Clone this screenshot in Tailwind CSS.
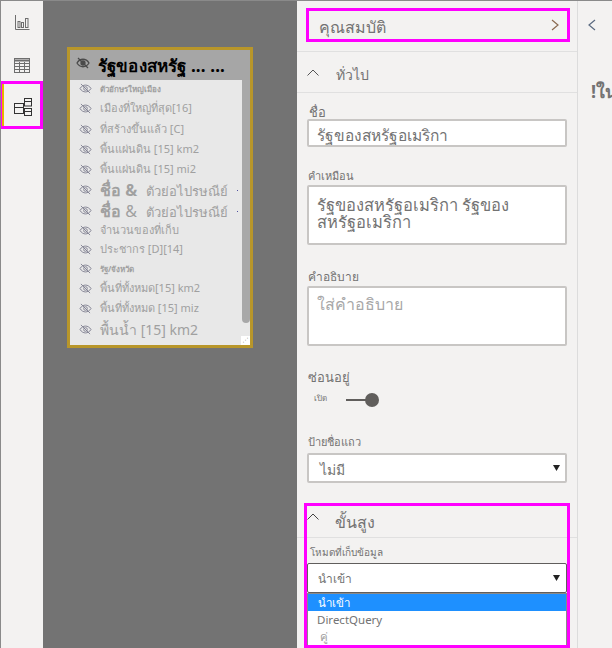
<!DOCTYPE html>
<html><head><meta charset="utf-8"><script src="https://cdn.jsdelivr.net/npm/@tailwindcss/browser@4"></script></head>
<body class="m-0 overflow-hidden">
<div class="w-[612px] h-[648px] flex bg-[#f3f2f1] font-['Noto_Sans','DejaVu_Sans',sans-serif] text-[#737373] overflow-hidden border-t border-[#8a8a8a]">
  <!-- rail -->
  <div class="w-[43px] h-full shrink-0 flex flex-col items-stretch pt-[7px] border-l border-[#8a8a8a]">
    <div class="h-[28px] flex items-center justify-center">
      <svg width="15" height="15" viewBox="0 0 15 15" fill="none" stroke="#6e6e6e"><path d="M.5 0v14.500H14.500"/><rect x="3" y="6.500" width="2" height="6"/><rect x="6.500" y="7.500" width="2" height="5"/><rect x="10.500" y="3.500" width="2.500" height="9"/></svg>
    </div>
    <div class="h-[28px] mt-[15px] flex items-center justify-center">
      <svg width="16" height="15" viewBox="0 0 16 15" fill="none" stroke="#6e6e6e"><rect x=".5" y=".5" width="15" height="14"/><path d="M.5 2.500h15" stroke-width="2"/><path d="M.5 5.500h15M.5 8.500h15M.5 11.500h15M5.500 4v10M10.500 4v10"/></svg>
    </div>
    <div class="h-[48px] w-[42px] mt-[2px] border-[3px] border-l-[1px] border-[#ff00ff] flex items-stretch bg-[#f3f2f1]">
      <span class="w-[2px] bg-[#e8b400]"></span>
      <div class="flex-1 flex items-center justify-center pt-[3px] pl-[1px]">
        <svg width="18" height="18" viewBox="0 0 18 18" fill="none" stroke="#333"><rect x=".5" y="5.500" width="9" height="10"/><path d="M.5 9.500h9"/><rect x="10.500" y=".5" width="7" height="7.500" fill="#f3f2f1"/><path d="M10.500 3.500h7"/><rect x="10.500" y="10.500" width="7" height="7" fill="#f3f2f1"/><path d="M10.500 13.500h7"/></svg>
      </div>
    </div>
  </div>
  <!-- canvas -->
  <div class="relative w-[254px] h-full shrink-0 bg-[#737373]">
    <div class="absolute left-[24px] top-[46px] w-[186px] h-[301px] border-[3px] border-[#b8962a] bg-[#e8e8e8] flex flex-col overflow-hidden">
      <div class="h-[30px] shrink-0 bg-[#a6a6a6] flex items-center pl-[6px] gap-[8px]">
        <svg class="-mt-[5px]" width="14" height="12" viewBox="0 0 14 12" fill="none" stroke="#4a4a4a" stroke-width="1.3"><path d="M1 6c3-5 9-5 12 0c-3 5-9 5-12 0z"/><path d="M2 1l10 10"/><circle cx="7" cy="6" r="2" fill="#4a4a4a"/></svg>
        <span class="text-[17px] leading-none font-bold text-black whitespace-nowrap tracking-[0.15px] pt-[1px]">รัฐของสหรัฐ ... ...</span>
      </div>
      <div class="relative flex-1 flex flex-col text-[#a0a0a0]">
        <div class="absolute right-0 top-0 w-[8px] h-[243px] bg-[#a8a8a8] rounded-b"></div>
        <div class="absolute right-0 bottom-0 w-[9px] h-[9px] bg-white text-[#555] text-[6px] leading-[9px] text-center">⋰</div>
        <div class="h-[17px] flex items-center pl-[9px] gap-[8px] text-[8px] font-bold"><svg width="13" height="11" viewBox="0 0 14 12" fill="none" stroke="#808090"><path d="M1 6c3-5 9-5 12 0c-3 5-9 5-12 0z"/><path d="M2 1l10 10"/><circle cx="7" cy="6" r="2"/></svg><span class="whitespace-nowrap">ตัวอักษรใหญ่เมือง</span></div>
        <div class="h-[22px] flex items-center pl-[9px] gap-[8px] text-[11px]"><svg width="13" height="11" viewBox="0 0 14 12" fill="none" stroke="#808090"><path d="M1 6c3-5 9-5 12 0c-3 5-9 5-12 0z"/><path d="M2 1l10 10"/><circle cx="7" cy="6" r="2"/></svg><span class="whitespace-nowrap">เมืองที่ใหญ่ที่สุด[16]</span></div>
        <div class="h-[20px] flex items-center pl-[9px] gap-[8px] text-[11px]"><svg width="13" height="11" viewBox="0 0 14 12" fill="none" stroke="#808090"><path d="M1 6c3-5 9-5 12 0c-3 5-9 5-12 0z"/><path d="M2 1l10 10"/><circle cx="7" cy="6" r="2"/></svg><span class="whitespace-nowrap">ที่สร้างขึ้นแล้ว [C]</span></div>
        <div class="h-[20px] flex items-center pl-[9px] gap-[8px] text-[11px]"><svg width="13" height="11" viewBox="0 0 14 12" fill="none" stroke="#808090"><path d="M1 6c3-5 9-5 12 0c-3 5-9 5-12 0z"/><path d="M2 1l10 10"/><circle cx="7" cy="6" r="2"/></svg><span class="whitespace-nowrap">พื้นแผ่นดิน [15] km2</span></div>
        <div class="h-[20px] flex items-center pl-[9px] gap-[8px] text-[11px]"><svg width="13" height="11" viewBox="0 0 14 12" fill="none" stroke="#808090"><path d="M1 6c3-5 9-5 12 0c-3 5-9 5-12 0z"/><path d="M2 1l10 10"/><circle cx="7" cy="6" r="2"/></svg><span class="whitespace-nowrap">พื้นแผ่นดิน [15] mi2</span></div>
        <div class="relative h-[21px] flex items-center pl-[9px] gap-[8px] text-[13px]"><svg width="13" height="11" viewBox="0 0 14 12" fill="none" stroke="#808090"><path d="M1 6c3-5 9-5 12 0c-3 5-9 5-12 0z"/><path d="M2 1l10 10"/><circle cx="7" cy="6" r="2"/></svg><span class="whitespace-nowrap"><b class="text-[16px]">ชื่อ &amp;</b><span class="ml-[9px]">ตัวย่อไปรษณีย์</span></span><span class="absolute left-[167px] top-[11px] w-[1px] h-[1px] bg-[#5050a0]"></span></div>
        <div class="relative h-[21px] flex items-center pl-[9px] gap-[8px] text-[13px]"><svg width="13" height="11" viewBox="0 0 14 12" fill="none" stroke="#808090"><path d="M1 6c3-5 9-5 12 0c-3 5-9 5-12 0z"/><path d="M2 1l10 10"/><circle cx="7" cy="6" r="2"/></svg><span class="whitespace-nowrap"><span class="text-[16px]"><b>ชื่อ</b> &amp;</span><span class="ml-[9px]">ตัวย่อไปรษณีย์</span></span><span class="absolute left-[167px] top-[11px] w-[1px] h-[1px] bg-[#5050a0]"></span></div>
        <div class="h-[18px] flex items-center pl-[9px] gap-[8px] text-[11px]"><svg width="13" height="11" viewBox="0 0 14 12" fill="none" stroke="#808090"><path d="M1 6c3-5 9-5 12 0c-3 5-9 5-12 0z"/><path d="M2 1l10 10"/><circle cx="7" cy="6" r="2"/></svg><span class="whitespace-nowrap">จำนวนของที่เก็บ</span></div>
        <div class="h-[20px] flex items-center pl-[9px] gap-[8px] text-[11px]"><svg width="13" height="11" viewBox="0 0 14 12" fill="none" stroke="#808090"><path d="M1 6c3-5 9-5 12 0c-3 5-9 5-12 0z"/><path d="M2 1l10 10"/><circle cx="7" cy="6" r="2"/></svg><span class="whitespace-nowrap">ประชากร [D][14]</span></div>
        <div class="h-[19px] flex items-center pl-[9px] gap-[8px] text-[8px] font-bold"><svg width="13" height="11" viewBox="0 0 14 12" fill="none" stroke="#808090"><path d="M1 6c3-5 9-5 12 0c-3 5-9 5-12 0z"/><path d="M2 1l10 10"/><circle cx="7" cy="6" r="2"/></svg><span class="whitespace-nowrap">รัฐ/จังหวัด</span></div>
        <div class="h-[20px] flex items-center pl-[9px] gap-[8px] text-[11px]"><svg width="13" height="11" viewBox="0 0 14 12" fill="none" stroke="#808090"><path d="M1 6c3-5 9-5 12 0c-3 5-9 5-12 0z"/><path d="M2 1l10 10"/><circle cx="7" cy="6" r="2"/></svg><span class="whitespace-nowrap">พื้นที่ทั้งหมด[15] km2</span></div>
        <div class="h-[20px] flex items-center pl-[9px] gap-[8px] text-[11px]"><svg width="13" height="11" viewBox="0 0 14 12" fill="none" stroke="#808090"><path d="M1 6c3-5 9-5 12 0c-3 5-9 5-12 0z"/><path d="M2 1l10 10"/><circle cx="7" cy="6" r="2"/></svg><span class="whitespace-nowrap">พื้นที่ทั้งหมด [15] miz</span></div>
        <div class="h-[22px] flex items-center pl-[9px] gap-[8px] text-[14px]"><svg width="13" height="11" viewBox="0 0 14 12" fill="none" stroke="#808090"><path d="M1 6c3-5 9-5 12 0c-3 5-9 5-12 0z"/><path d="M2 1l10 10"/><circle cx="7" cy="6" r="2"/></svg><span class="whitespace-nowrap">พื้นน้ำ [15] km2</span></div>
      </div>
    </div>
  </div>
  <!-- panel -->
  <div class="relative w-[281px] h-full shrink-0 border-r border-r-[#dcdcdc] flex flex-col">
    <div class="h-[51px] shrink-0 border-b border-[#e0e0e0] pt-[7px] pl-[9px]">
      <div class="h-[34px] w-[264px] border-[3px] border-[#ff00ff] flex items-center justify-between pl-[10px] pr-[8px]">
        <span class="text-[16px] leading-none pt-[4px] whitespace-nowrap">คุณสมบัติ</span>
        <svg width="8" height="12" viewBox="0 0 8 12" fill="none" stroke="#8a6a50" stroke-width="1.2"><path d="M1 1l6 5-6 5"/></svg>
      </div>
    </div>
    <div class="h-[41px] shrink-0 border-b border-[#e0e0e0] flex items-center pl-[10px] gap-[17px]">
      <svg width="12" height="7" viewBox="0 0 12 7" fill="none" stroke="#555"><path d="M.5 6.500L6 1l5.500 5.500"/></svg>
      <span class="text-[14px] leading-none pt-[5px]">ทั่วไป</span>
    </div>
    <div class="flex flex-col pl-[10px] pr-[11px]">
      <div class="h-[26px] flex items-end pl-[2px] text-[13px] font-medium leading-none">ชื่อ</div>
      <div class="h-[28px] bg-white border-2 border-[#c8c6c4] rounded-[2px] flex items-center pl-[8px] pt-[6px] text-[15.500px] leading-none whitespace-nowrap w-[260px] overflow-hidden">รัฐของสหรัฐอเมริกา</div>
      <div class="h-[38px] flex items-end pb-[4px] pl-[1px] text-[11px] leading-none">คำเหมือน</div>
      <div class="h-[60px] bg-white border-2 border-[#c8c6c4] rounded-[2px] pl-[8px] pt-[9px] text-[16.500px] leading-[17px] w-[260px] overflow-hidden">รัฐของสหรัฐอเมริกา รัฐของ<br>สหรัฐอเมริกา</div>
      <div class="h-[41px] flex items-end pb-[3px] pl-[1px] text-[12px] leading-none">คำอธิบาย</div>
      <div class="h-[60px] bg-white border-2 border-[#c8c6c4] rounded-[2px] pl-[8px] pt-[8px] text-[16px] leading-[16px] text-[#a8a8a8] w-[260px]">ใส่คำอธิบาย</div>
      <div class="h-[41px] flex items-end pb-[3px] pl-[1px] text-[13px] leading-none">ซ่อนอยู่</div>
      <div class="h-[26px] flex items-center pl-[7px]">
        <span class="text-[8px] w-[32px] leading-none -mt-[4px]">เปิด</span>
        <span class="w-[20px] h-[2px] bg-[#605e5c]"></span>
        <span class="w-[14px] h-[14px] rounded-full bg-[#605e5c] -ml-[1px]"></span>
      </div>
      <div class="h-[40px] flex items-end pb-[6px] pl-[1px] text-[11px] leading-none">ป้ายชื่อแถว</div>
      <div class="h-[30px] bg-white border-2 border-[#c8c6c4] rounded-[2px] flex items-center justify-between pl-[11px] pr-[5px] text-[14px] leading-none w-[260px]"><span class="pt-[3px]">ไม่มี</span><svg width="7" height="6" viewBox="0 0 7 6"><path d="M0 0h7L3.500 6z" fill="#222"/></svg></div>
    </div>
    <div class="absolute left-0 right-0 top-[536px] h-[1px] bg-[#e0e0e0]"></div>
    <div class="absolute left-[7px] top-[502px] w-[266px] h-[145px] border-[3px] border-[#ff00ff] flex flex-col">
      <div class="h-[31px] shrink-0 flex items-center gap-[16px]">
        <svg width="12" height="7" viewBox="0 0 12 7" fill="none" stroke="#444" class="-mt-[10px]"><path d="M.5 6.500L6 1l5.500 5.500"/></svg>
        <span class="text-[16px] leading-none font-medium">ขั้นสูง</span>
      </div>
      <div class="h-[26px] flex items-end pb-[6px] pl-[3px] text-[10px] leading-none">โหมดที่เก็บข้อมูล</div>
      <div class="h-[30px] w-[260px] bg-white border border-[#605e5c] rounded-[2px] flex items-center justify-between pl-[10px] pr-[6px] text-[12px] leading-none"><span class="pt-[1px]">นำเข้า</span><svg width="7" height="6" viewBox="0 0 7 6"><path d="M0 0h7L3.500 6z" fill="#222"/></svg></div>
      <div class="w-[260px] flex-1 bg-white border border-[#8a8a8a] border-b-0 flex flex-col text-[11.500px] leading-none">
        <div class="h-[17px] bg-[#1e90ff] text-white flex items-center pl-[10px]">นำเข้า</div>
        <div class="h-[16px] flex items-center pl-[9px] pt-[1px]">DirectQuery</div>
        <div class="h-[16px] flex items-center pl-[12px] pt-[3px] text-[#a0a0a0]">คู่</div>
      </div>
    </div>
  </div>
  <!-- right -->
  <div class="flex-1 h-full flex flex-col pl-[10px] pt-[18px] overflow-hidden">
    <svg width="8" height="12" viewBox="0 0 8 12" fill="none" stroke="#5a6a80" stroke-width="1.2"><path d="M7 1L1 6l6 5"/></svg>
    <span class="mt-[51px] ml-[3px] text-[18px] font-bold leading-none whitespace-nowrap">!ใน</span>
  </div>
</div>
</body></html>
